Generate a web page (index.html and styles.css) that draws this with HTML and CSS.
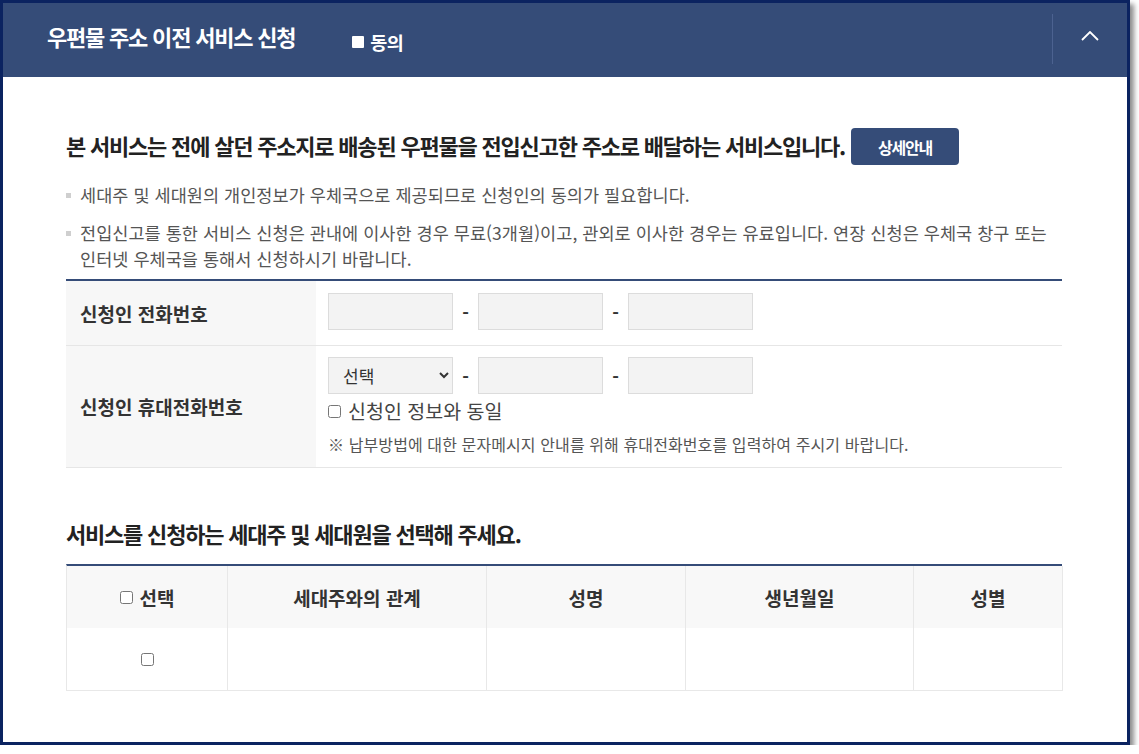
FILE: index.html
```html
<!DOCTYPE html>
<html lang="ko">
<head>
<meta charset="utf-8">
<title>우편물 주소 이전 서비스 신청</title>
<link rel="stylesheet" href="styles.css">
</head>
<body>
<div class="frame">
  <header class="panel-head">
    <h1 class="panel-title">우편물 주소 이전 서비스 신청</h1>
    <span class="agree"><span class="agree-box"></span>동의</span>
    <div class="head-spacer"></div>
    <button class="toggle" type="button" aria-label="접기">
      <svg width="18" height="10" viewBox="0 0 18 10"><polyline points="1,9 9,1 17,9" fill="none" stroke="#fff" stroke-width="1.8"/></svg>
    </button>
  </header>
  <main class="panel-body">
    <div class="intro">
      <h2 class="intro-title">본 서비스는 전에 살던 주소지로 배송된 우편물을 전입신고한 주소로 배달하는 서비스입니다.</h2>
      <button class="btn-detail" type="button">상세안내</button>
    </div>
    <ul class="bullets">
      <li>세대주 및 세대원의 개인정보가 우체국으로 제공되므로 신청인의 동의가 필요합니다.</li>
      <li>전입신고를 통한 서비스 신청은 관내에 이사한 경우 무료(3개월)이고, 관외로 이사한 경우는 유료입니다. 연장 신청은 우체국 창구 또는 인터넷 우체국을 통해서 신청하시기 바랍니다.</li>
    </ul>

    <div class="form">
      <div class="form-row row-phone">
        <div class="form-label">신청인 전화번호</div>
        <div class="form-field">
          <div class="phone">
            <input class="inp" type="text"><span class="dash">-</span><input class="inp" type="text"><span class="dash">-</span><input class="inp" type="text">
          </div>
        </div>
      </div>
      <div class="form-row row-mobile">
        <div class="form-label">신청인 휴대전화번호</div>
        <div class="form-field">
          <div class="phone">
            <select class="sel"><option>선택</option></select><span class="dash">-</span><input class="inp" type="text"><span class="dash">-</span><input class="inp" type="text">
          </div>
          <label class="same"><input type="checkbox"> 신청인 정보와 동일</label>
          <p class="note">※ 납부방법에 대한 문자메시지 안내를 위해 휴대전화번호를 입력하여 주시기 바랍니다.</p>
        </div>
      </div>
    </div>

    <h2 class="sec-title">서비스를 신청하는 세대주 및 세대원을 선택해 주세요.</h2>
    <div class="grid">
      <div class="gh c1"><label class="chk"><input type="checkbox"> 선택</label></div>
      <div class="gh">세대주와의 관계</div>
      <div class="gh">성명</div>
      <div class="gh">생년월일</div>
      <div class="gh">성별</div>
      <div class="gd c1"><input type="checkbox"></div>
      <div class="gd"></div>
      <div class="gd"></div>
      <div class="gd"></div>
      <div class="gd"></div>
    </div>
  </main>
</div>
</body>
</html>
```

FILE: styles.css
```css
* { box-sizing: border-box; }
html, body { margin: 0; padding: 0; background: #fff; }
body { font-family: "Noto Sans CJK KR", "Noto Sans", sans-serif; color: #333; }

.frame {
  width: 1130px;
  height: 745px;
  border: 3px solid #0b2360;
  background: #fff;
  box-shadow: 4px 4px 5px rgba(0,0,0,0.45);
  display: flex;
  flex-direction: column;
}

.panel-head {
  height: 74px;
  background: #354c78;
  display: flex;
  align-items: center;
  padding-left: 44px;
  color: #fff;
}
.panel-title {
  margin: 0 0 8px 0;
  font-size: 22px;
  font-weight: 700;
  letter-spacing: -1.2px;
  line-height: 30px;
}
.agree {
  margin-left: 57px;
  margin-top: 4px;
  display: flex;
  align-items: center;
  font-size: 18.5px;
  font-weight: 700;
  letter-spacing: -0.6px;
}
.agree-box {
  width: 12px; height: 12px;
  background: #fff;
  border-radius: 1px;
  margin-right: 6px;
}
.head-spacer { flex: 1; }
.toggle {
  width: 75px;
  height: 50px;
  border: 0;
  border-left: 1px solid #4c6290;
  background: transparent;
  display: flex;
  align-items: center;
  justify-content: center;
  padding: 0 0 6px 0;
  margin-bottom: 2px;
}

.panel-body {
  padding: 51px 65px 0 63px;
}
.intro {
  display: flex;
  align-items: center;
  height: 37px;
}
.intro-title {
  margin: 0 0 3px 0;
  font-size: 22px;
  font-weight: 700;
  letter-spacing: -1.2px;
  color: #222;
  line-height: 30px;
}
.btn-detail {
  margin-left: 6px;
  width: 108px;
  height: 37px;
  border: 0;
  border-radius: 4px;
  background: #354c78;
  color: #fff;
  font-family: inherit;
  font-size: 16px;
  font-weight: 700;
  letter-spacing: -1.2px;
}

.bullets {
  list-style: none;
  margin: 17px 0 0 0;
  padding: 0;
}
.bullets li {
  position: relative;
  padding-left: 14px;
  font-size: 17.5px;
  line-height: 26px;
  color: #555;
  letter-spacing: 0.05px;
}
.bullets li + li { margin-top: 12px; }
.bullets li::before {
  content: "";
  position: absolute;
  left: 0;
  top: 11px;
  width: 5px;
  height: 5px;
  background: #cfcfcf;
}

.form {
  margin-top: 7px;
  border-top: 2px solid #354c78;
}
.form-row {
  display: grid;
  grid-template-columns: 250px 1fr;
  border-bottom: 1px solid #e6e6e6;
}
.form-label {
  background: #f7f7f7;
  display: flex;
  align-items: center;
  padding-left: 14px;
  font-size: 19px;
  font-weight: 700;
  letter-spacing: 0;
  color: #333;
}
.form-field { padding: 0 12px; }
.row-phone .form-field { padding-top: 12px; padding-bottom: 15px; }
.row-mobile .form-field { padding-top: 11px; padding-bottom: 12px; }
.phone { display: flex; align-items: center; }
.inp, .sel {
  width: 125px;
  height: 37px;
  background: #f3f3f3;
  border: 1px solid #dcdcdc;
  border-radius: 0;
  font-family: inherit;
  margin: 0;
}
.sel {
  padding-left: 10px;
  font-size: 17px;
  color: #333;
}
.dash {
  width: 25px;
  text-align: center;
  font-size: 18px;
  font-weight: 700;
  color: #333;
}
.same {
  display: flex;
  align-items: center;
  margin-top: 5px;
  font-size: 19.5px;
  color: #444;
  line-height: 24px;
  letter-spacing: 0;
}
.same input { margin: 0 7px 0 0; width: 13px; height: 13px; }
.note {
  margin: 10px 0 0 0;
  font-size: 16px;
  line-height: 22px;
  color: #555;
  letter-spacing: 0.1px;
}

.sec-title {
  margin: 50px 0 0 0;
  font-size: 22px;
  font-weight: 700;
  letter-spacing: -1.2px;
  color: #222;
  line-height: 30px;
}
.grid {
  margin-top: 16px;
  display: grid;
  grid-template-columns: 161px 259px 199px 228px 149px;
  border-top: 2px solid #354c78;
  border-left: 1px solid #e8e8e8;
}
.gh, .gd {
  border-right: 1px solid #e8e8e8;
  border-bottom: 1px solid #e8e8e8;
  display: flex;
  align-items: center;
  justify-content: center;
}
.gh {
  height: 62px;
  background: #f8f8f8;
  border-bottom: 0;
  font-size: 19px;
  font-weight: 700;
  color: #333;
  letter-spacing: 0;
}
.gd { height: 63px; }
.chk { display: flex; align-items: center; }
.chk input { margin: 0 7px 0 0; width: 13px; height: 13px; }
.gd input { margin: 0; width: 13px; height: 13px; }
```
